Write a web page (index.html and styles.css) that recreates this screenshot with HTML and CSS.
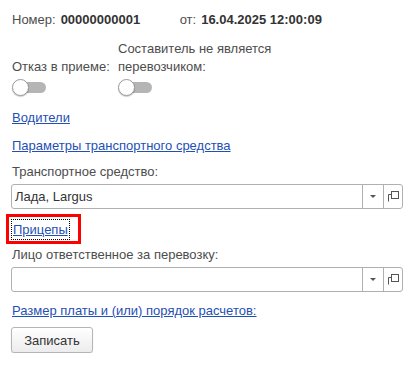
FILE: index.html
```html
<!DOCTYPE html>
<html lang="ru">

<head>
    <meta charset="UTF-8">
    <title>Документ</title>
    <link rel="stylesheet" href="styles.css">
</head>

<body>
    <div class="form">
        <!-- шапка: номер и дата -->
        <div class="head">
            <span class="lbl">Номер:</span>
            <span class="val num">00000000001</span>
            <span class="lbl">от:</span>
            <span class="val">16.04.2025 12:00:09</span>
        </div>

        <!-- флажки -->
        <div class="switches">
            <div class="sw-item sw-first">
                <div class="sw-label">Отказ в приеме:</div>
                <div class="toggle"><span class="knob"></span></div>
            </div>
            <div class="sw-item">
                <div class="sw-label">Составитель не является<br>перевозчиком:</div>
                <div class="toggle"><span class="knob"></span></div>
            </div>
        </div>

        <a class="link row-drivers" href="javascript:;">Водители</a>
        <a class="link row-params" href="javascript:;">Параметры транспортного средства</a>

        <div class="field">
            <div class="f-label">Транспортное средство:</div>
            <div class="input">
                <div class="input-text">Лада, Largus</div>
                <div class="btn-drop"><span class="tri"></span></div>
                <div class="btn-open">
                    <svg width="11" height="11" viewBox="0 0 11 11">
                        <path d="M0.5 10.5V3.5H3" fill="none" stroke="#555" stroke-width="1"/>
                        <rect x="3.5" y="0.5" width="7" height="7" fill="none" stroke="#555" stroke-width="1"/>
                    </svg>
                </div>
            </div>
        </div>

        <div class="trailers">
            <a class="link focused" href="javascript:;">Прицепы</a>
        </div>

        <div class="field field-after">
            <div class="f-label">Лицо ответственное за перевозку:</div>
            <div class="input">
                <div class="input-text"></div>
                <div class="btn-drop"><span class="tri"></span></div>
                <div class="btn-open">
                    <svg width="11" height="11" viewBox="0 0 11 11">
                        <path d="M0.5 10.5V3.5H3" fill="none" stroke="#555" stroke-width="1"/>
                        <rect x="3.5" y="0.5" width="7" height="7" fill="none" stroke="#555" stroke-width="1"/>
                    </svg>
                </div>
            </div>
        </div>

        <a class="link row-pay" href="javascript:;">Размер платы и (или) порядок расчетов:</a>

        <div class="actions">
            <button class="btn">Записать</button>
        </div>
    </div>
</body>

</html>
```

FILE: styles.css
```css
* {
    margin: 0;
    padding: 0;
    box-sizing: border-box;
}

body {
    font-family: Arial, "Liberation Sans", sans-serif;
    font-size: 13px;
    color: #4d4d4d;
    background: #fff;
}

.form {
    padding: 12px 5px 0 11px;
    display: flex;
    flex-direction: column;
}

.head {
    display: flex;
    align-items: baseline;
    height: 17px;
    padding-left: 1px;
}

.head .lbl {
    margin-right: 5px;
}

.head .val {
    font-weight: bold;
    color: #333;
}

.head .num {
    width: 119px;
}

.switches {
    display: flex;
    margin-top: 11px;
    padding-left: 1px;
}

.sw-item {
    display: flex;
    flex-direction: column;
    justify-content: flex-end;
}

.sw-first {
    width: 106px;
}

.sw-label {
    line-height: 18px;
}

.toggle {
    position: relative;
    width: 35px;
    height: 17px;
    margin-top: 3px;
}

.toggle::before {
    content: "";
    position: absolute;
    left: 4px;
    top: 3px;
    width: 30px;
    height: 11px;
    border-radius: 6px;
    background: #b5b5b5;
}

.knob {
    position: absolute;
    left: 0;
    top: 0;
    width: 17px;
    height: 17px;
    border-radius: 50%;
    background: #fff;
    border: 1px solid #9a9a9a;
    box-shadow: 0 1px 1px rgba(0, 0, 0, .2);
}

.link {
    color: #1f50b5;
    text-decoration: underline;
    align-self: flex-start;
}

.row-drivers {
    margin-top: 14px;
    margin-left: 1px;
}

.row-params {
    margin-top: 13px;
    margin-left: 1px;
}

.field {
    display: flex;
    flex-direction: column;
    margin-top: 11px;
}

.field-after {
    margin-top: 3px;
}

.f-label {
    padding-left: 1px;
    height: 15px;
}

.input {
    display: flex;
    height: 25px;
    margin-top: 5px;
    border: 1px solid #b0b0b0;
    border-radius: 3px;
    background: #fff;
}

.input-text {
    flex: 1;
    padding: 4px 0 0 3px;
    color: #333;
}

.btn-drop {
    width: 21px;
    border-left: 1px solid #b0b0b0;
    display: flex;
    align-items: center;
    justify-content: center;
}

.tri {
    width: 0;
    height: 0;
    border-left: 3px solid transparent;
    border-right: 3px solid transparent;
    border-top: 3px solid #555;
}

.btn-open {
    width: 19px;
    border-left: 1px solid #b0b0b0;
    display: flex;
    align-items: center;
    justify-content: center;
}

.trailers {
    align-self: flex-start;
    margin: 5px 0 0 -5px;
    border: 3px solid #f00;
    padding: 3px 9px 2px 3px;
}

.focused {
    display: block;
    outline: 1px dotted #000;
    padding: 2px 1px;
}

.row-pay {
    margin-top: 11px;
    margin-left: 1px;
}

.actions {
    margin-top: 9px;
}

.btn {
    width: 82px;
    height: 26px;
    font-family: Arial, "Liberation Sans", sans-serif;
    font-size: 13px;
    color: #333;
    border: 1px solid #b5b5b5;
    border-radius: 3px;
    background: linear-gradient(#fff, #ececec);
    box-shadow: 0 1px 1px rgba(0, 0, 0, .15);
}
```
